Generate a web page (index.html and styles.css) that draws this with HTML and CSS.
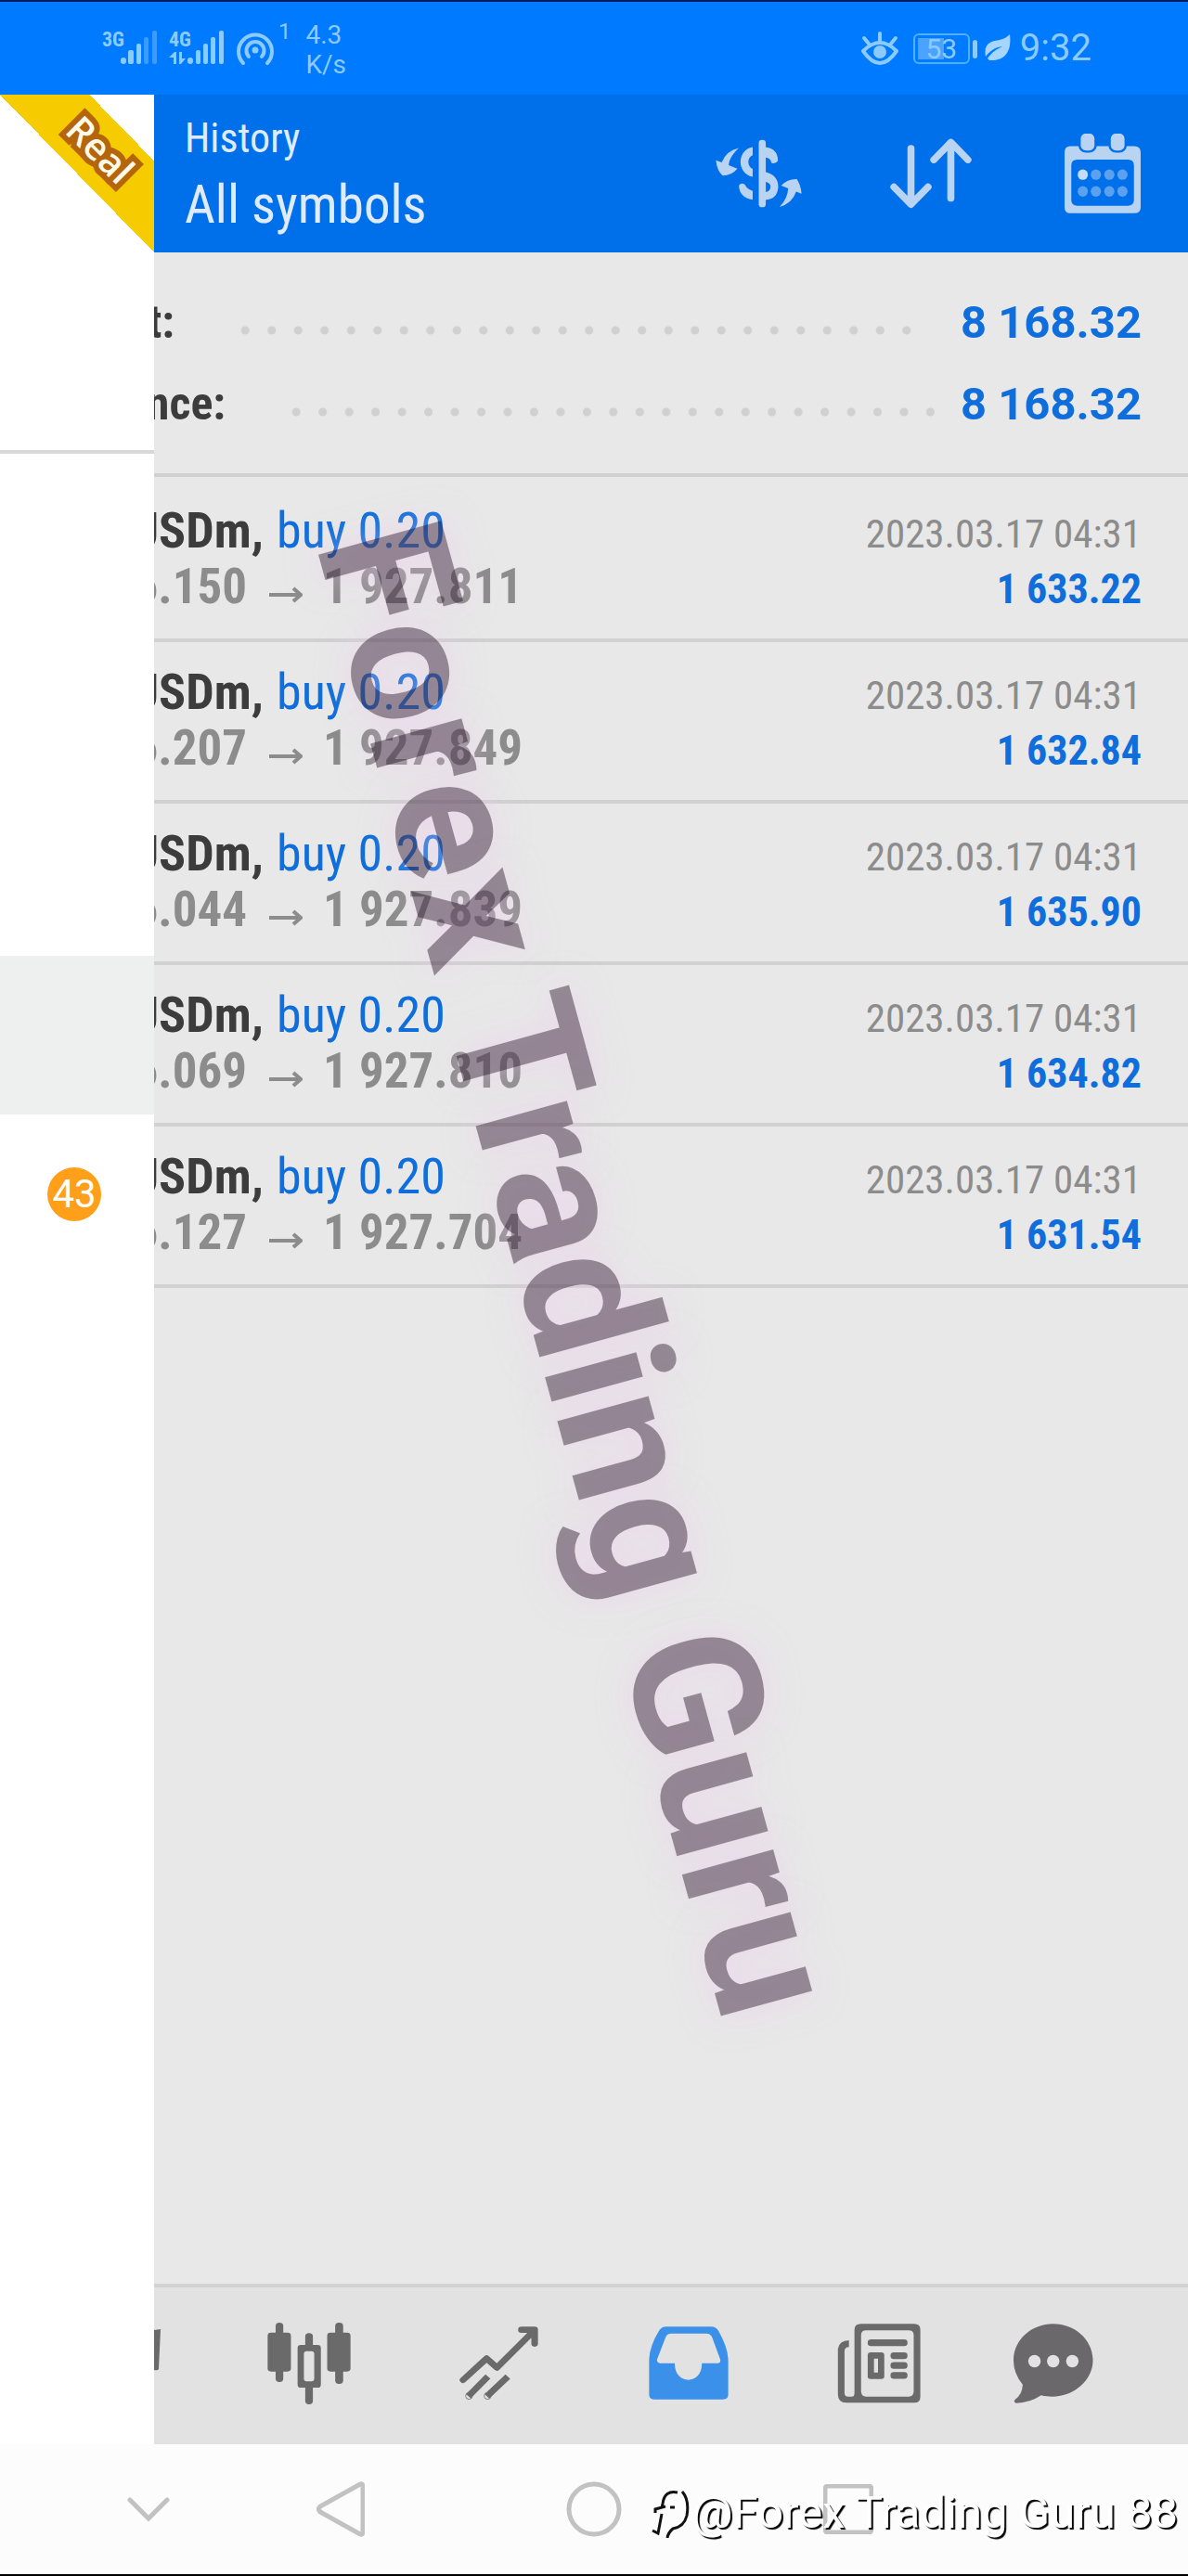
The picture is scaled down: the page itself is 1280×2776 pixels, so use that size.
FILE: index.html
```
<!DOCTYPE html>
<html lang="en">
<head>
    <meta charset="UTF-8">
    <meta name="viewport" content="width=device-width, initial-scale=1.0">
    <title>History</title>

    <link rel="stylesheet" href="styles.css">

</head>
<body>

    <div class="status-bar">
        <div class="status-left">
            <svg class="signal" width="60" height="40" viewBox="0 0 60 40">
                <text x="0" y="18">3G</text>
                <g fill="#8ccbff">
                    <rect x="20" y="30" width="6" height="7" rx="3"/>
                    <rect x="28" y="22" width="6" height="15" rx="2"/>
                    <rect x="37" y="15" width="5" height="22" rx="2"/>
                </g>
                <g fill="#3b9bff">
                    <rect x="45" y="8" width="5" height="29" rx="2"/>
                    <rect x="54" y="1" width="5" height="36" rx="2"/>
                </g>
            </svg>
            <svg class="signal" width="60" height="40" viewBox="0 0 60 40">
                <text x="0" y="18">4G</text>
                <g fill="#8ccbff">
                    <path d="M0 30l6-6h2v13H5v-7zM11 24h3v7h4l-5 6h-2z"/>
                    <rect x="20" y="30" width="6" height="7" rx="3"/>
                    <rect x="29" y="22" width="5" height="15" rx="2"/>
                    <rect x="37" y="15" width="5" height="22" rx="2"/>
                    <rect x="45" y="8" width="5" height="29" rx="2"/>
                    <rect x="54" y="1" width="5" height="36" rx="2"/>
                </g>
            </svg>
            <svg width="42" height="40" viewBox="0 0 42 40" fill="none" stroke="#8ccbff" stroke-width="4" stroke-linecap="round">
                <path d="M8 36A18 18 0 1 1 34 36"/>
                <path d="M14 29A9.500 9.500 0 1 1 28 29"/>
                <circle cx="21" cy="22" r="3.500" fill="#8ccbff" stroke="none"/>
            </svg>
            <span class="hotspot-count">1</span>
            <span class="speed">4.3<br>K/s</span>
        </div>
        <div class="status-right">
            <svg width="40" height="38" viewBox="0 0 40 38" fill="none" stroke="#8ccbff" stroke-width="4" stroke-linecap="round">
                <path d="M2 22Q20 4 38 22Q20 48 2 22Z" stroke-linejoin="round"/>
                <circle cx="20" cy="23" r="7" fill="#8ccbff" stroke="none"/>
                <path d="M20 3v8M3 8l5 6M37 8l-5 6"/>
            </svg>
            <span class="battery"><span class="battery-level">53</span></span>
            <svg class="leaf" width="28" height="32" viewBox="0 0 28 32">
                <path fill="#a6d6ff" d="M27 1C29 17 24 30 5 29L3 27C8 20 13 17 19 14C11 15 5 19 1 25C-2 10 8 8 16 7C21 6 24 4 27 1Z"/>
            </svg>
            <span class="clock">9:32</span>
        </div>
    </div>

    <div class="app">
        <aside class="drawer">
            <div class="account">
                <div class="ribbon"><span>Real</span></div>
            </div>
            <ul class="menu">
                <li></li>
                <li></li>
                <li></li>
                <li class="selected"></li>
                <li><span class="badge">43</span></li>
            </ul>
        </aside>

        <main class="screen">
            <header class="toolbar">
                <div class="titles">
                    <h2>History</h2>
                    <h1>All symbols</h1>
                </div>
                <div class="actions">
                    <button type="button" aria-label="Currency">
                        <svg width="93" height="74" viewBox="90 146 270 219" preserveAspectRatio="none" fill="#b9d3f2">
                            <rect x="225" y="148" width="22" height="215" rx="10"/>
                            <path d="M163 174C143 192 132 212 131 229L158 240Q141 262 112 262Q95 248 91 213L109 220Q124 182 163 174Z"/>
                            <path d="M206 171C156 180 155 255 206 266V241C188 232 188 204 206 197Z"/>
                            <path d="M245 171Q285 175 285 215Q279 226 265 222Q263 207 245 204Z"/>
                            <path fill-rule="evenodd" d="M245 250Q286 260 286 298Q284 338 245 340ZM247 282V315Q262 312 262 298Q262 286 247 282Z"/>
                            <path d="M206 311Q187 305 182 291Q171 282 163 293Q164 332 206 339Z"/>
                            <path d="M290 362Q316 335 317 303L295 294Q315 272 344 273Q356 290 359 320L342 313Q330 350 290 362Z"/>
                        </svg>
                    </button>
                    <button type="button" aria-label="Sort">
                        <svg width="88" height="76" viewBox="636 146 254 229" preserveAspectRatio="none" fill="none" stroke="#b9d3f2" stroke-width="22" stroke-linecap="round" stroke-linejoin="round">
                            <path d="M701 179V360M648 304L701 361L754 304"/>
                            <path d="M825 341V160M772 216L825 159L878 216"/>
                        </svg>
                    </button>
                    <button type="button" aria-label="Calendar">
                        <svg width="82" height="86" viewBox="1182 128 238 257" preserveAspectRatio="none">
                            <path fill="#b9d3f2" fill-rule="evenodd" d="M1200 168H1400Q1420 168 1420 188V366Q1420 384 1400 384H1200Q1182 384 1182 366V188Q1182 168 1200 168ZM1222 212Q1203 212 1203 230V342Q1203 360 1222 360H1380Q1399 360 1399 342V230Q1399 212 1380 212Z"/>
                            <g fill="#b9d3f2" stroke="#006fea" stroke-width="7">
                                <rect x="1229" y="124" width="50" height="62" rx="20"/>
                                <rect x="1323" y="124" width="50" height="62" rx="20"/>
                            </g>
                            <ellipse cx="1239" cy="260" rx="16" ry="17" fill="#c4dcf8"/>
                            <g fill="#5ba1f0">
                                <ellipse cx="1280" cy="260" rx="16" ry="17"/>
                                <ellipse cx="1322" cy="260" rx="16" ry="17"/>
                                <ellipse cx="1363" cy="260" rx="16" ry="17"/>
                                <ellipse cx="1239" cy="314" rx="16" ry="17"/>
                                <ellipse cx="1280" cy="314" rx="16" ry="17"/>
                                <ellipse cx="1322" cy="314" rx="16" ry="17"/>
                                <ellipse cx="1363" cy="314" rx="16" ry="17"/>
                            </g>
                        </svg>
                    </button>
                </div>
            </header>

            <section class="summary">
                <div class="summary-row profit">
                    <span class="label">t:</span>
                    <span class="dots"></span>
                    <span class="amount">8 168.32</span>
                </div>
                <div class="summary-row balance">
                    <span class="label">nce:</span>
                    <span class="dots"></span>
                    <span class="amount">8 168.32</span>
                </div>
            </section>

            <ul class="deals">
                <li>
                    <div class="line"><span class="symbol">USDm,</span><span class="side">buy 0.20</span><span class="date">2023.03.17 04:31</span></div>
                    <div class="line"><span class="open">6.150</span><svg class="arrow" width="36" height="18" viewBox="0 0 36 18"><path d="M0 9h34M26 2l8 7l-8 7"/></svg><span class="close">1 927.811</span><span class="gain">1 633.22</span></div>
                </li>
                <li>
                    <div class="line"><span class="symbol">USDm,</span><span class="side">buy 0.20</span><span class="date">2023.03.17 04:31</span></div>
                    <div class="line"><span class="open">6.207</span><svg class="arrow" width="36" height="18" viewBox="0 0 36 18"><path d="M0 9h34M26 2l8 7l-8 7"/></svg><span class="close">1 927.849</span><span class="gain">1 632.84</span></div>
                </li>
                <li>
                    <div class="line"><span class="symbol">USDm,</span><span class="side">buy 0.20</span><span class="date">2023.03.17 04:31</span></div>
                    <div class="line"><span class="open">6.044</span><svg class="arrow" width="36" height="18" viewBox="0 0 36 18"><path d="M0 9h34M26 2l8 7l-8 7"/></svg><span class="close">1 927.839</span><span class="gain">1 635.90</span></div>
                </li>
                <li>
                    <div class="line"><span class="symbol">USDm,</span><span class="side">buy 0.20</span><span class="date">2023.03.17 04:31</span></div>
                    <div class="line"><span class="open">6.069</span><svg class="arrow" width="36" height="18" viewBox="0 0 36 18"><path d="M0 9h34M26 2l8 7l-8 7"/></svg><span class="close">1 927.810</span><span class="gain">1 634.82</span></div>
                </li>
                <li>
                    <div class="line"><span class="symbol">USDm,</span><span class="side">buy 0.20</span><span class="date">2023.03.17 04:31</span></div>
                    <div class="line"><span class="open">6.127</span><svg class="arrow" width="36" height="18" viewBox="0 0 36 18"><path d="M0 9h34M26 2l8 7l-8 7"/></svg><span class="close">1 927.704</span><span class="gain">1 631.54</span></div>
                </li>
            </ul>

            <nav class="tabs">
                <span class="tab-cut">
                    <svg width="7" height="76" viewBox="0 0 7 76"><path fill="#6b6a6b" d="M0 2L7 1L5 44Q4 46 0 45V8Z"/></svg>
                </span>
                <button type="button" aria-label="Charts">
                    <svg width="90" height="88" viewBox="416 189 251 264" preserveAspectRatio="none" fill="#6b6a6b">
                        <rect x="441" y="189" width="23" height="192" rx="11"/>
                        <rect x="417" y="221" width="70" height="126" rx="10"/>
                        <rect x="620" y="189" width="24" height="198" rx="11"/>
                        <rect x="596" y="221" width="70" height="126" rx="10"/>
                        <rect x="530" y="223" width="23" height="60" rx="11"/>
                        <rect x="530" y="385" width="23" height="68" rx="11"/>
                        <path d="M520 265H565V395H520Z" fill="#e2e2e2"/>
                        <path fill-rule="evenodd" d="M517 261H567Q577 261 577 271V389Q577 399 567 399H517Q507 399 507 389V271Q507 261 517 261ZM534 281Q526 281 526 290V370Q526 379 534 379H549Q557 379 557 370V290Q557 281 549 281Z"/>
                    </svg>
                </button>
                <button type="button" aria-label="Trade">
                    <svg width="85" height="79" viewBox="994 199 238 238" preserveAspectRatio="none" fill="none" stroke="#6b6a6b" stroke-width="20" stroke-linecap="round" stroke-linejoin="round">
                        <path d="M1005 373L1076 303L1107 333L1220 212M1181 210H1221V255"/>
                        <path stroke-linecap="butt" d="M1021 426L1080 362M1077 426L1140 362"/>
                        <circle cx="1023" cy="425" r="1"/>
                        <circle cx="1079" cy="425" r="1"/>
                    </svg>
                </button>
                <button type="button" aria-label="History">
                    <svg width="86" height="79" viewBox="100 199 218 237" preserveAspectRatio="none">
                        <path fill="#3b90ea" fill-rule="evenodd" d="M148 200H270Q284 200 291 215Q317 270 317 310V420Q317 435 300 435H117Q101 435 101 420V310Q101 265 128 213Q135 200 148 200ZM161 222Q150 222 146 234L123 305Q121 318 132 318H171C169 390 247 390 245 318H288Q298 318 295 305L273 234Q268 222 258 222Z"/>
                    </svg>
                </button>
                <button type="button" aria-label="News">
                    <svg width="90" height="86" viewBox="615 188 227 259" preserveAspectRatio="none" fill="#6b6a6b">
                        <path fill-rule="evenodd" d="M680 189H824Q841 189 841 208V426Q841 445 824 445H640Q617 445 617 418V270Q620 243 647 242V264Q635 264 635 278V414Q635 425 645 425H655Q662 425 662 414V208Q662 189 680 189ZM694 210Q680 210 680 226V408Q680 425 694 425H809Q823 425 823 408V226Q823 210 809 210Z"/>
                        <rect x="698" y="239" width="108" height="22" rx="9"/>
                        <path fill-rule="evenodd" d="M706 281H735Q743 281 743 290V360Q743 368 735 368H706Q698 368 698 360V290Q698 281 706 281ZM715 302V347H726V302Z"/>
                        <rect x="760" y="281" width="46" height="22" rx="9"/>
                        <rect x="760" y="313" width="46" height="22" rx="9"/>
                        <rect x="760" y="345" width="46" height="22" rx="9"/>
                    </svg>
                </button>
                <button type="button" aria-label="Messages">
                    <svg width="120" height="86" viewBox="1094 188 303 259" preserveAspectRatio="none">
                        <path fill="#6b686b" d="M1202 189C1262 189 1310 242 1310 308C1310 378 1245 443 1169 421Q1138 446 1101 446Q1093 443 1098 435Q1118 418 1119 386Q1094 350 1094 308C1094 242 1142 189 1202 189Z"/>
                        <g fill="#e2e2e2">
                            <ellipse cx="1151" cy="310" rx="17" ry="20"/>
                            <ellipse cx="1202" cy="310" rx="17" ry="20"/>
                            <ellipse cx="1254" cy="310" rx="17" ry="20"/>
                        </g>
                    </svg>
                </button>
            </nav>
        </main>

        <div class="watermark">Forex Trading Guru</div>
    </div>

    <div class="system-nav">
        <button type="button" class="hide-key" aria-label="Hide">
            <svg width="46" height="26" viewBox="0 0 46 26"><path d="M3 3L23 23L43 3"/></svg>
        </button>
        <div class="keys">
            <button type="button" aria-label="Back">
                <svg width="52" height="60" viewBox="0 0 52 60"><path d="M47 3Q50 2 50 6V54Q50 58 47 57L4 33Q1 30 4 27Z"/></svg>
            </button>
            <button type="button" aria-label="Home">
                <svg width="60" height="60" viewBox="0 0 60 60"><circle cx="30" cy="30" r="27"/></svg>
            </button>
            <button type="button" aria-label="Recent">
                <svg width="54" height="54" viewBox="0 0 54 54"><rect x="2" y="2" width="50" height="50" rx="3"/></svg>
            </button>
        </div>
        <div class="credit">
            <svg width="42" height="54" viewBox="0 0 42 54" fill="none" stroke="#111" stroke-width="3">
                <path d="M28 5Q14 2 12 17L11 21M4 27V23L15 20M11 28L7 49L1 46M20 21h5M33 4Q41 13 38 30Q35 42 23 44Q18 48 17 54"/>
            </svg>
            <span>@Forex Trading Guru 88</span>
        </div>
    </div>

</body>
</html>
```
FILE: styles.css
```
* {
    box-sizing: border-box;
}
body {
    font-family: 'Roboto Condensed', Roboto, sans-serif;
    display: flex;
    flex-direction: column;
    min-height: 100vh;
    margin: 0;
    background-color: #fcfcfc;
    color: #3c3c3c;
    overflow-x: hidden;
}
h1, h2, ul {
    margin: 0;
    padding: 0;
    font-weight: 400;
    list-style: none;
}
button {
    display: flex;
    align-items: center;
    justify-content: center;
    padding: 0;
    border: none;
    background: none;
    cursor: pointer;
}
svg {
    display: block;
    flex-shrink: 0;
}

/* Phone status bar */
.status-bar {
    display: flex;
    justify-content: space-between;
    height: 102px;
    padding: 0 104px 0 110px;
    border-top: 2px solid #001a5c;
    background-color: #007aff;
    color: #8ccbff;
    font-family: Roboto, sans-serif;
}
.status-left, .status-right {
    display: flex;
    align-items: center;
}
.status-left {
    gap: 12px;
}
.signal {
    overflow: visible;
}
.signal text {
    font-family: 'Roboto Condensed', Roboto, sans-serif;
    font-size: 22px;
    font-weight: 700;
    fill: #8ccbff;
}
.hotspot-count {
    align-self: flex-start;
    margin-left: -8px;
    padding-top: 20px;
    font-size: 24px;
    line-height: 24px;
}
.speed {
    margin-left: 4px;
    padding-top: 4px;
    font-size: 28px;
    line-height: 32px;
}
.status-right {
    gap: 10px;
}
.battery {
    position: relative;
    width: 61px;
    height: 33px;
    margin: 0 6px;
    padding: 3px;
    border: 2px solid #4fb0ff;
    border-radius: 6px;
}
.battery::after {
    content: "";
    position: absolute;
    top: 5px;
    right: -10px;
    width: 5px;
    height: 20px;
    border-radius: 3px;
    background-color: #8ccbff;
}
.battery-level {
    display: block;
    height: 23px;
    background: linear-gradient(to right, #4aa3ff 55%, transparent 55%);
    font-size: 30px;
    line-height: 24px;
    text-align: center;
}
.clock {
    font-size: 40px;
    line-height: 48px;
}

/* App */
.app {
    position: relative;
    display: flex;
    flex: 1;
}
.drawer {
    width: 166px;
    flex-shrink: 0;
    background-color: #fff;
}
.account {
    height: 387px;
    border-bottom: 4px solid #d8d8d8;
}
.ribbon {
    display: flex;
    align-items: center;
    justify-content: center;
    height: 170px;
    padding: 0 0 52px 50px;
    background: linear-gradient(to top right, #fff 50%, #f6cc00 50%, #f6cc00 79%, #fff 79%);
}
.ribbon span {
    transform: rotate(45deg);
    color: #fffbe8;
    font-family: 'Open Sans', sans-serif;
    font-size: 40px;
    font-weight: 600;
    line-height: 40px;
    -webkit-text-stroke: 12px #b5650b;
    paint-order: stroke fill;
}
.menu {
    padding-top: 28px;
}
.menu li {
    display: flex;
    align-items: center;
    height: 171px;
    padding-left: 51px;
}
.menu .selected {
    background-color: #eeefef;
}
.badge {
    width: 58px;
    height: 58px;
    border-radius: 50%;
    background-color: #ff9f1a;
    color: #fff;
    font-family: Roboto, sans-serif;
    font-size: 42px;
    line-height: 58px;
    text-align: center;
}

.screen {
    display: flex;
    flex: 1;
    flex-direction: column;
    min-width: 0;
    background-color: #e8e8e8;
}
.toolbar {
    display: flex;
    align-items: center;
    justify-content: space-between;
    height: 170px;
    padding: 0 46px 0 33px;
    background-color: #006fea;
    color: #dfebfa;
}
.titles {
    padding-top: 4px;
}
.toolbar h2 {
    font-size: 44px;
    line-height: 64px;
}
.toolbar h1 {
    font-size: 57px;
    line-height: 80px;
}
.actions {
    display: flex;
    gap: 92px;
}
.actions button {
    width: 93px;
    height: 90px;
}

/* Totals */
.summary {
    padding: 31px 50px 31px 0;
    border-bottom: 4px solid #d1d1d1;
    font-weight: 700;
}
.summary-row {
    display: flex;
    align-items: center;
    height: 88px;
}
.label {
    display: flex;
    justify-content: flex-end;
    overflow: hidden;
    font-size: 50px;
}
.profit .label {
    width: 22px;
}
.balance .label {
    width: 77px;
}
.dots {
    flex: 1;
    height: 10px;
    margin: 18px 44px 0 62px;
    background-image: radial-gradient(circle, #d0d0d0 4px, transparent 5px);
    background-size: 28px 10px;
    background-repeat: round no-repeat;
}
.balance .dots {
    margin-right: 18px;
}
.amount {
    color: #0f6edb;
    font-family: Roboto, sans-serif;
    font-size: 49px;
}

/* Deals list */
.deals {
    flex: 1;
}
.deals li {
    height: 174px;
    padding: 18px 50px 0 0;
    border-bottom: 4px solid #d1d1d1;
}
.deals li:first-child {
    height: 178px;
    padding-top: 22px;
}
.line {
    display: flex;
    align-items: baseline;
    height: 60px;
    font-size: 54px;
    line-height: 72px;
    white-space: nowrap;
}
.symbol, .open {
    display: flex;
    justify-content: flex-end;
    overflow: hidden;
    font-weight: 700;
}
.symbol {
    width: 118px;
}
.side {
    margin-left: 14px;
    color: #0f6edb;
}
.open {
    width: 100px;
}
.open, .close {
    color: #8c8c8c;
    font-size: 53px;
    font-weight: 700;
}
.arrow {
    margin: 0 22px 0 24px;
    fill: none;
    stroke: #8c8c8c;
    stroke-width: 4;
}
.date, .gain {
    margin-left: auto;
    font-size: 44px;
}
.date {
    color: #8c8c8c;
    font-size: 43px;
}
.gain {
    color: #0f6edb;
    font-weight: 700;
}

/* Bottom tabs */
.tabs {
    display: flex;
    align-items: center;
    height: 173px;
    padding: 0 26px 6px 0;
    border-top: 4px solid #d1d1d1;
    background-color: #e2e2e2;
}
.tab-cut {
    width: 65px;
}
.tabs button {
    flex: 1;
}

.watermark {
    position: absolute;
    top: 441px;
    left: 496px;
    transform: rotate(74.6deg);
    transform-origin: 0 0;
    color: rgba(20, 0, 20, 0.4);
    font-family: Roboto, sans-serif;
    font-size: 193px;
    font-weight: 700;
    line-height: 193px;
    text-shadow: 0 0 36px rgba(240, 200, 240, 0.5);
    white-space: nowrap;
    pointer-events: none;
}

/* Android navigation keys */
.system-nav {
    position: relative;
    display: flex;
    align-items: center;
    height: 142px;
    padding-left: 137px;
    border-bottom: 2px solid #000;
}
.hide-key {
    margin-right: 158px;
}
.keys {
    display: flex;
    align-items: center;
    gap: 217px;
}
.system-nav button svg {
    fill: none;
    stroke: #c2c2c2;
    stroke-width: 5;
    stroke-linecap: round;
}
.credit {
    position: absolute;
    right: 11px;
    bottom: 36px;
    display: flex;
    align-items: center;
    gap: 2px;
    color: #fff;
    font-family: Roboto, sans-serif;
    font-size: 49px;
    line-height: 60px;
    text-shadow: 2px 2px 1px #000;
    white-space: nowrap;
}
```
